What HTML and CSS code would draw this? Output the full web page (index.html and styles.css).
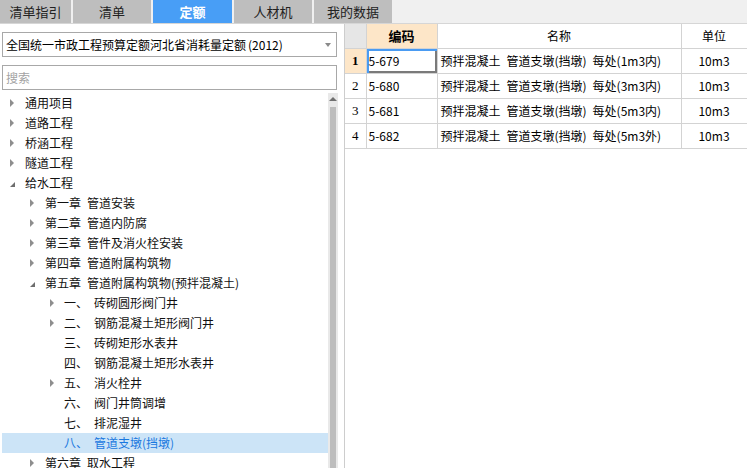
FILE: index.html
```html
<!DOCTYPE html>
<html lang="zh-CN">
<head>
<meta charset="utf-8">
<title>定额</title>
<link rel="stylesheet" href="styles.css">
</head>
<body>
<div class="app">
  <div class="tabs">
    <div class="tab t1">清单指引</div>
    <div class="tab">清单</div>
    <div class="tab active">定额</div>
    <div class="tab">人材机</div>
    <div class="tab">我的数据</div>
  </div>
  <div class="main">
    <div class="left">
      <div class="select"><span>全国统一市政工程预算定额河北省消耗量定额&#8198;(2012)</span><i class="caret"></i></div>
      <div class="search">搜索</div>
      <div class="tree-wrap">
        <ul class="tree">
          <li class="l0"><span class="ic"><i class="closed"></i></span>通用项目</li>
          <li class="l0"><span class="ic"><i class="closed"></i></span>道路工程</li>
          <li class="l0"><span class="ic"><i class="closed"></i></span>桥涵工程</li>
          <li class="l0"><span class="ic"><i class="closed"></i></span>隧道工程</li>
          <li class="l0"><span class="ic"><i class="open"></i></span>给水工程</li>
          <li class="l1"><span class="ic"><i class="closed"></i></span>第一章&ensp;管道安装</li>
          <li class="l1"><span class="ic"><i class="closed"></i></span>第二章&ensp;管道内防腐</li>
          <li class="l1"><span class="ic"><i class="closed"></i></span>第三章&ensp;管件及消火栓安装</li>
          <li class="l1"><span class="ic"><i class="closed"></i></span>第四章&ensp;管道附属构筑物</li>
          <li class="l1"><span class="ic"><i class="open"></i></span>第五章&ensp;管道附属构筑物(预拌混凝土)</li>
          <li class="l2"><span class="ic"><i class="closed"></i></span><span class="no">一、</span>砖砌圆形阀门井</li>
          <li class="l2"><span class="ic"><i class="closed"></i></span><span class="no">二、</span>钢筋混凝土矩形阀门井</li>
          <li class="l2"><span class="ic"></span><span class="no">三、</span>砖砌矩形水表井</li>
          <li class="l2"><span class="ic"></span><span class="no">四、</span>钢筋混凝土矩形水表井</li>
          <li class="l2"><span class="ic"><i class="closed"></i></span><span class="no">五、</span>消火栓井</li>
          <li class="l2"><span class="ic"></span><span class="no">六、</span>阀门井筒调增</li>
          <li class="l2"><span class="ic"></span><span class="no">七、</span>排泥湿井</li>
          <li class="l2 sel"><span class="ic"></span><span class="no">八、</span>管道支墩(挡墩)</li>
          <li class="l1"><span class="ic"><i class="closed"></i></span>第六章&ensp;取水工程</li>
        </ul>
        <div class="scroll">
          <i class="up"></i>
          <div class="thumb"></div>
        </div>
      </div>
    </div>
    <div class="right">
      <table class="grid">
        <colgroup>
          <col class="c0"><col class="c1"><col class="c2"><col class="c3">
        </colgroup>
        <thead>
          <tr>
            <th class="rn"></th>
            <th class="hl">编码</th>
            <th>名称</th>
            <th>单位</th>
          </tr>
        </thead>
        <tbody>
          <tr>
            <td class="rn cur">1</td>
            <td class="code selcell">5-679</td>
            <td class="name">预拌混凝土&ensp;管道支墩(挡墩)&ensp;每处(1m3内)</td>
            <td class="unit">10m3</td>
          </tr>
          <tr>
            <td class="rn">2</td>
            <td class="code">5-680</td>
            <td class="name">预拌混凝土&ensp;管道支墩(挡墩)&ensp;每处(3m3内)</td>
            <td class="unit">10m3</td>
          </tr>
          <tr>
            <td class="rn">3</td>
            <td class="code">5-681</td>
            <td class="name">预拌混凝土&ensp;管道支墩(挡墩)&ensp;每处(5m3内)</td>
            <td class="unit">10m3</td>
          </tr>
          <tr>
            <td class="rn">4</td>
            <td class="code">5-682</td>
            <td class="name">预拌混凝土&ensp;管道支墩(挡墩)&ensp;每处(5m3外)</td>
            <td class="unit">10m3</td>
          </tr>
        </tbody>
      </table>
    </div>
  </div>
</div>
</body>
</html>
```

FILE: styles.css
```css
html, body {
  margin: 0;
  padding: 0;
  background: #fff;
}
body {
  font-family: "Noto Sans CJK SC", "Liberation Sans", sans-serif;
  font-size: 12px;
  color: #000;
}
.app {
  width: 747px;
  height: 468px;
  overflow: hidden;
  display: flex;
  flex-direction: column;
}
.tabs {
  display: flex;
  gap: 2px;
  height: 23px;
  flex: none;
  background: #f0f0f0;
  border-bottom: 1px solid #d6d6d6;
}
.tab {
  width: 78px;
  background: #bebebe;
  color: #222;
  font-size: 13px;
  display: flex;
  align-items: center;
  justify-content: center;
}
.tab.t1 { width: 71px; }
.tab.active {
  width: 79px;
  background: #489ef6;
  color: #fff;
  font-weight: bold;
}
.main {
  flex: 1;
  display: flex;
  min-height: 0;
}
.left {
  width: 344px;
  flex: none;
  box-sizing: border-box;
  padding: 8px 0 0 2px;
  display: flex;
  flex-direction: column;
}
.select {
  width: 335px;
  height: 25px;
  box-sizing: border-box;
  border: 1px solid #a8a8a8;
  display: flex;
  align-items: center;
  justify-content: space-between;
  padding: 0 5px 0 3px;
  white-space: nowrap;
}
.caret {
  width: 0;
  height: 0;
  border-top: 4px solid #8a8a8a;
  border-left: 3px solid transparent;
  border-right: 3px solid transparent;
}
.search {
  margin-top: 8px;
  width: 335px;
  height: 25px;
  box-sizing: border-box;
  border: 1px solid #a8a8a8;
  padding-left: 3px;
  line-height: 23px;
  color: #a3a3a3;
}
.tree-wrap {
  margin-top: 3px;
  flex: 1;
  display: flex;
  min-height: 0;
}
.tree {
  list-style: none;
  margin: 0;
  padding: 0;
  width: 326px;
  flex: none;
  overflow: hidden;
}
.tree li {
  height: 20px;
  line-height: 20px;
  display: flex;
  align-items: center;
  white-space: nowrap;
  color: #111;
}
.tree li.l1 { padding-left: 20px; }
.tree li.l2 { padding-left: 40px; }
.tree li.sel {
  background: #cce4f7;
  color: #1a78e0;
}
.ic {
  width: 23px;
  flex: none;
  height: 20px;
  display: flex;
  align-items: center;
  padding-left: 8px;
  box-sizing: border-box;
}
.l2 .ic { width: 22px; }
.closed {
  width: 0;
  height: 0;
  border-left: 4px solid #8e8e8e;
  border-top: 4px solid transparent;
  border-bottom: 4px solid transparent;
}
.open {
  width: 0;
  height: 0;
  margin-top: 3px;
  border-bottom: 5px solid #6e6e6e;
  border-left: 5px solid transparent;
}
.no {
  width: 30px;
  flex: none;
}
.scroll {
  width: 10px;
  flex: none;
  background: #e9e9e9;
  display: flex;
  flex-direction: column;
  align-items: center;
}
.up {
  margin-top: 4px;
  width: 0;
  height: 0;
  border-bottom: 4px solid #707070;
  border-left: 4px solid transparent;
  border-right: 4px solid transparent;
}
.thumb {
  margin-top: 6px;
  width: 6px;
  flex: 1;
  background: #bdbdbd;
}
.right {
  flex: 1;
  border-left: 1px solid #cdcdcd;
  min-width: 0;
}
.grid {
  border-collapse: collapse;
  table-layout: fixed;
  width: 402px;
}
.c0 { width: 21px; }
.c1 { width: 71px; }
.c2 { width: 244px; }
.c3 { width: 66px; }
.grid th, .grid td {
  border: 1px solid #d3d3d3;
  padding: 0;
  white-space: nowrap;
  overflow: hidden;
}
.grid tr > :first-child { border-left: none; }
.grid thead th { border-top: none; }
.grid thead tr { height: 24px; }
.grid tbody tr { height: 25px; }
.grid th {
  font-weight: normal;
  text-align: center;
}
.grid th.rn { background: #e6e6e6; }
.grid th.hl {
  background: #fde6c8;
  font-weight: bold;
  font-size: 13px;
}
.grid td.rn {
  text-align: center;
  font-family: "Liberation Serif", serif;
  font-size: 13px;
}
.grid td.rn.cur {
  background: #fde6c8;
  font-weight: bold;
}
.grid td.code { padding-left: 2px; }
.grid td.selcell {
  box-shadow: inset 2px 2px 0 #4a9bf2, inset -2px -2px 0 #7a7a7a;
}
.grid td.name { padding-left: 3px; }
.grid td.unit { text-align: center; }
```
